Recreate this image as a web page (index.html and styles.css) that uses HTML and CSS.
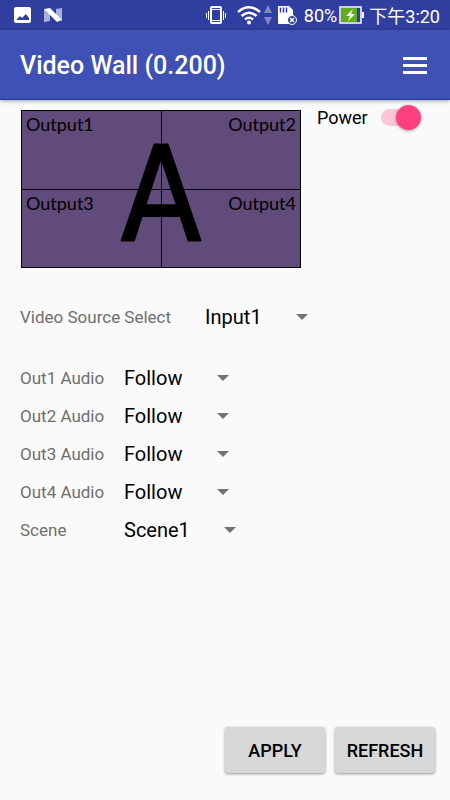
FILE: index.html
```
<!DOCTYPE html>
<html lang="en">

<head>
    <meta charset="utf-8">
    <meta name="viewport" content="width=device-width, initial-scale=1">
    <title>Video Wall</title>
    <link rel="stylesheet" href="styles.css">
</head>

<body>
    <div class="status-bar">
        <svg class="icon-image" width="18" height="18" viewBox="0 0 18 18">
            <rect x="0" y="1" width="17" height="16" rx="2" fill="#fff"/>
            <path d="M3 14v-1l3-3 2 2 4-4 3 4v2z" fill="#303f9f"/>
        </svg>
        <svg class="icon-n" width="20" height="16" viewBox="0 0 20 16">
            <path d="M1 2l6 5v7l-6 1zM13 2l6-1v13l-6-5z" fill="#a9b0da"/>
            <path d="M1 2l6-1 12 12-5 2z" fill="#fff"/>
        </svg>
        <span class="spacer"></span>
        <svg width="22" height="20" viewBox="0 0 22 20" fill="none" stroke="#fff">
            <rect x="6" y="2" width="10" height="16" rx="1" stroke-width="2"/>
            <path d="M6 4.500h10M9 2h4M6 15.500h10M3.500 6v9M18.500 6v9M1.500 8v5M20.500 8v5"/>
        </svg>
        <svg class="icon-wifi" width="24" height="20" viewBox="0 0 24 20" fill="none" stroke="#fff" stroke-width="2.500">
            <path d="M1 7q11-9.500 22 0M4.500 11q7.500-6.500 15 0M8 14.500q4-3.500 8 0"/>
            <circle cx="12" cy="17.500" r="2" fill="#fff" stroke="none"/>
        </svg>
        <svg class="icon-traffic" width="8" height="20" viewBox="0 0 8 20" fill="#7f88c8">
            <path d="M0 8l4-8 4 8zM0 12h8l-4 8z"/>
        </svg>
        <svg class="icon-card" width="20" height="20" viewBox="0 0 20 20">
            <path d="M1 2q0-1 1-1h10l4 4v13q0 1-1 1H2q-1 0-1-1z" fill="#fff"/>
            <path d="M3.500 2.500v5M6.500 2.500v5M9.500 2.500v5" stroke="#303f9f" stroke-width="1.500"/>
            <circle cx="15" cy="15" r="4.500" fill="#303f9f" stroke="#fff"/>
            <path d="M13 13l4 4M17 13l-4 4" stroke="#fff" stroke-width="1.500"/>
        </svg>
        <span class="battery-level">80%</span>
        <svg class="icon-battery" width="26" height="18" viewBox="0 0 26 18">
            <rect x="1" y="1" width="21" height="16" fill="#303f9f" stroke="#fff" stroke-width="1.500"/>
            <rect x="2" y="2" width="16" height="14" fill="#5fae1c"/>
            <path d="M23 6h2v6h-2z" fill="#fff"/>
            <path d="M14 3l-7 7h4l-2 5 7-7h-4z" fill="#fff"/>
        </svg>
        <span class="clock">下午3:20</span>
    </div>

    <header class="app-bar">
        <h1>Video Wall (0.200)</h1>
        <button type="button" class="menu-button" aria-label="Menu">
            <svg width="24" height="18" viewBox="0 0 24 18" fill="#fff">
                <path d="M0 0h24v3H0zM0 7h24v3H0zM0 14h24v3H0z"/>
            </svg>
        </button>
    </header>

    <main>
        <div class="top">
            <div class="wall">
                <div>Output1</div>
                <div class="right">Output2</div>
                <div>Output3</div>
                <div class="right">Output4</div>
                <svg class="source" viewBox="0 0 280 158">
                    <text x="140" y="131" text-anchor="middle">A</text>
                </svg>
            </div>
            <label class="power">Power
                <input type="checkbox" role="switch" class="switch" checked>
            </label>
        </div>

        <div class="source-row">
            <label for="source">Video Source Select</label>
            <span class="spinner"><select id="source"><option>Input1</option><option>Input2</option></select></span>
        </div>

        <div class="settings">
            <label for="out1">Out1 Audio</label>
            <span class="spinner"><select id="out1"><option>Follow</option></select></span>
            <label for="out2">Out2 Audio</label>
            <span class="spinner"><select id="out2"><option>Follow</option></select></span>
            <label for="out3">Out3 Audio</label>
            <span class="spinner"><select id="out3"><option>Follow</option></select></span>
            <label for="out4">Out4 Audio</label>
            <span class="spinner"><select id="out4"><option>Follow</option></select></span>
            <label for="scene">Scene</label>
            <span class="spinner"><select id="scene"><option>Scene1</option></select></span>
        </div>
    </main>

    <footer>
        <button type="button" class="action">APPLY</button>
        <button type="button" class="action">REFRESH</button>
    </footer>
</body>

</html>
```

FILE: styles.css
```
* {
    box-sizing: border-box;
}

body {
    display: flex;
    flex-direction: column;
    min-height: 100vh;
    margin: 0;
    background-color: #fafafa;
    color: #000;
    font-family: Roboto, "Noto Sans CJK TC", sans-serif;
}

/* status bar */
.status-bar {
    display: flex;
    align-items: center;
    height: 30px;
    padding: 0 10px 0 14px;
    background-color: #303f9f;
    color: #fff;
    font-size: 18px;
}

.icon-n {
    margin-left: 11px;
}

.spacer {
    flex: 1;
}

.icon-wifi {
    margin-left: 10px;
}

.icon-traffic {
    margin-left: 3px;
}

.icon-card {
    margin-left: 5px;
}

.battery-level {
    margin-left: 7px;
}

.icon-battery {
    margin: 0 4px 0 2px;
}

/* app bar */
.app-bar {
    display: flex;
    align-items: center;
    justify-content: space-between;
    height: 70px;
    padding: 2px 23px 0 20px;
    background-color: #3f51b5;
    border-bottom: 1px solid #2438a0;
    box-shadow: 0 1px 4px rgba(0, 0, 0, 0.35);
    color: #fff;
}

h1 {
    margin: 0;
    font-size: 25px;
    font-weight: 500;
}

.menu-button {
    display: flex;
    padding: 0;
    border: none;
    background: none;
    cursor: pointer;
}

main {
    flex: 1;
    padding: 0 20px;
}

.top {
    display: flex;
    align-items: flex-start;
    gap: 16px;
    padding: 4px 0 0 1px;
}

.wall {
    position: relative;
    display: grid;
    grid-template-columns: 1fr 1fr;
    grid-template-rows: 1fr 1fr;
    gap: 1px;
    flex: 0 1 280px;
    aspect-ratio: 280 / 158;
    margin-top: 6px;
    border: 1px solid #000;
    background-color: #000;
    font-family: Lato, sans-serif;
    font-size: 18px;
    line-height: 26px;
}

.wall div {
    padding: 0 4px;
    background-color: #604b7b;
}

.wall .right {
    text-align: right;
}

.source {
    position: absolute;
    inset: 0;
    overflow: visible;
}

.source text {
    font-family: "DejaVu Sans Condensed", "DejaVu Sans", sans-serif;
    font-size: 132px;
    stroke: #000;
    stroke-width: 2px;
    stroke-linejoin: round;
}

.power {
    display: flex;
    align-items: center;
    gap: 13px;
    height: 26px;
    font-size: 18px;
}

.switch {
    position: relative;
    width: 38px;
    height: 17px;
    margin: 0;
    border-radius: 9px;
    background-color: #fbc6d8;
    appearance: none;
    cursor: pointer;
}

.switch::after {
    content: "";
    position: absolute;
    top: -4px;
    right: -2px;
    width: 25px;
    height: 25px;
    border-radius: 50%;
    background-color: #ff4081;
    box-shadow: 0 1px 3px rgba(0, 0, 0, 0.35);
}

.switch:not(:checked)::after {
    right: 15px;
    background-color: #f1f1f1;
}

/* labels and spinners */
.source-row,
.settings {
    color: #6f6f6f;
    font-size: 17px;
}

.source-row {
    display: flex;
    align-items: center;
    gap: 34px;
    margin-top: 30px;
}

.settings {
    display: grid;
    grid-template-columns: 88px 1fr;
    grid-auto-rows: 38px;
    align-items: center;
    gap: 0 16px;
    margin-top: 23px;
}

.spinner {
    position: relative;
    justify-self: start;
}

.spinner::after {
    content: "";
    position: absolute;
    top: 16px;
    right: 0;
    border: 6px solid transparent;
    border-top-color: #737373;
    border-bottom: none;
    pointer-events: none;
}

select {
    height: 38px;
    padding: 0 46px 0 0;
    border: none;
    background: none;
    color: #000;
    font-family: inherit;
    font-size: 20px;
    appearance: none;
}

footer {
    display: flex;
    justify-content: flex-end;
    gap: 10px;
    padding: 0 15px 27px;
}

.action {
    width: 100px;
    height: 46px;
    padding: 0;
    border: none;
    border-radius: 3px;
    background-color: #d6d7d7;
    box-shadow: 0 1px 3px rgba(0, 0, 0, 0.4);
    color: #000;
    font-family: inherit;
    font-size: 18px;
    font-weight: 500;
    cursor: pointer;
}
```
